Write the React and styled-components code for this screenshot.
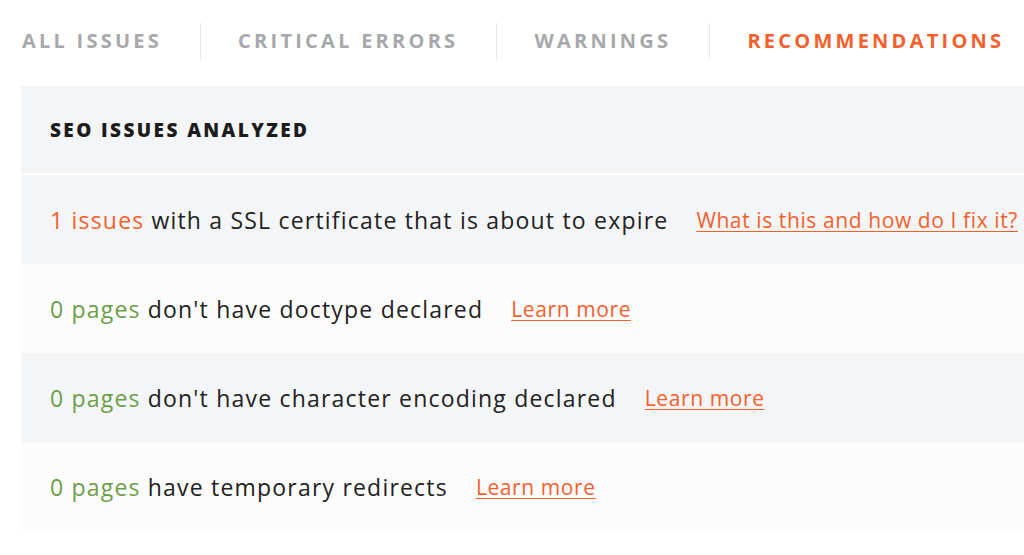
import React from 'react'
import styled, { createGlobalStyle } from 'styled-components'

const GlobalStyle = createGlobalStyle`
  html, body { margin: 0; padding: 0; background: #fff; }
  body { font-family: "Open Sans", "Liberation Sans", sans-serif; color: #222; }
`

const Page = styled.div`
  padding-left: 21px;
  width: 1003px;
`

const Tabs = styled.nav`
  display: flex;
  align-items: center;
  height: 86px;
  padding-bottom: 4px;
  box-sizing: border-box;
  margin-left: 1px;
`

const Tab = styled.a`
  font-size: 20px;
  font-weight: 700;
  letter-spacing: 3.25px;
  text-transform: uppercase;
  color: ${p => (p.$active ? '#f4602c' : '#a7a8ab')};
  text-decoration: none;
  padding: 0 38px 0 37px;
  line-height: 36px;
  white-space: nowrap;
  border-left: ${p => (p.$first ? 'none' : '1px solid #e3e6ea')};
  &:first-child { padding-left: 0; }
`

const Panel = styled.section`
  display: flex;
  flex-direction: column;
  gap: 2px;
`

const Header = styled.h5`
  margin: 0;
  height: 87px;
  display: flex;
  align-items: center;
  padding-left: 29px;
  background: #f4f5f7;
  font-size: 19px;
  font-weight: 800;
  letter-spacing: 2.4px;
  text-transform: uppercase;
  color: #1c1c1c;
`

const Rows = styled.div`
  display: flex;
  flex-direction: column;
`

const Row = styled.div`
  height: 89px;
  display: flex;
  align-items: center;
  padding-left: 29px;
  background: ${p => (p.$alt ? '#fcfcfd' : '#f4f5f7')};
  font-size: 23px;
  letter-spacing: 1.2px;
  color: #222;
  white-space: nowrap;
`

const Count = styled.span`
  color: ${p => (p.$tone === 'bad' ? '#f4602c' : '#6c9e49')};
  margin-right: 7px;
`

const Help = styled.a`
  color: #f4602c;
  text-decoration: underline;
  text-underline-offset: 3px;
  text-decoration-thickness: 1px;
  margin-left: 28px;
  font-size: 21px;
  letter-spacing: 0.6px;
`

const rows = [
  { count: '1 issues', tone: 'bad', text: 'with a SSL certificate that is about to expire', link: 'What is this and how do I fix it?' },
  { count: '0 pages', tone: 'ok', text: "don't have doctype declared", link: 'Learn more' },
  { count: '0 pages', tone: 'ok', text: "don't have character encoding declared", link: 'Learn more' },
  { count: '0 pages', tone: 'ok', text: 'have temporary redirects', link: 'Learn more' },
]

const App = () => {
  return (
    <Page>
      <GlobalStyle />
      <Tabs>
        <Tab $first>All issues</Tab>
        <Tab>Critical errors</Tab>
        <Tab>Warnings</Tab>
        <Tab $active>Recommendations</Tab>
      </Tabs>
      <Panel>
        <Header>SEO issues analyzed</Header>
        <Rows>
          {rows.map((r, i) => (
            <Row key={i} $alt={i % 2 === 1}>
              <Count $tone={r.tone}>{r.count}</Count>
              {r.text}
              <Help href="#">{r.link}</Help>
            </Row>
          ))}
        </Rows>
      </Panel>
    </Page>
  )
}

export default App
